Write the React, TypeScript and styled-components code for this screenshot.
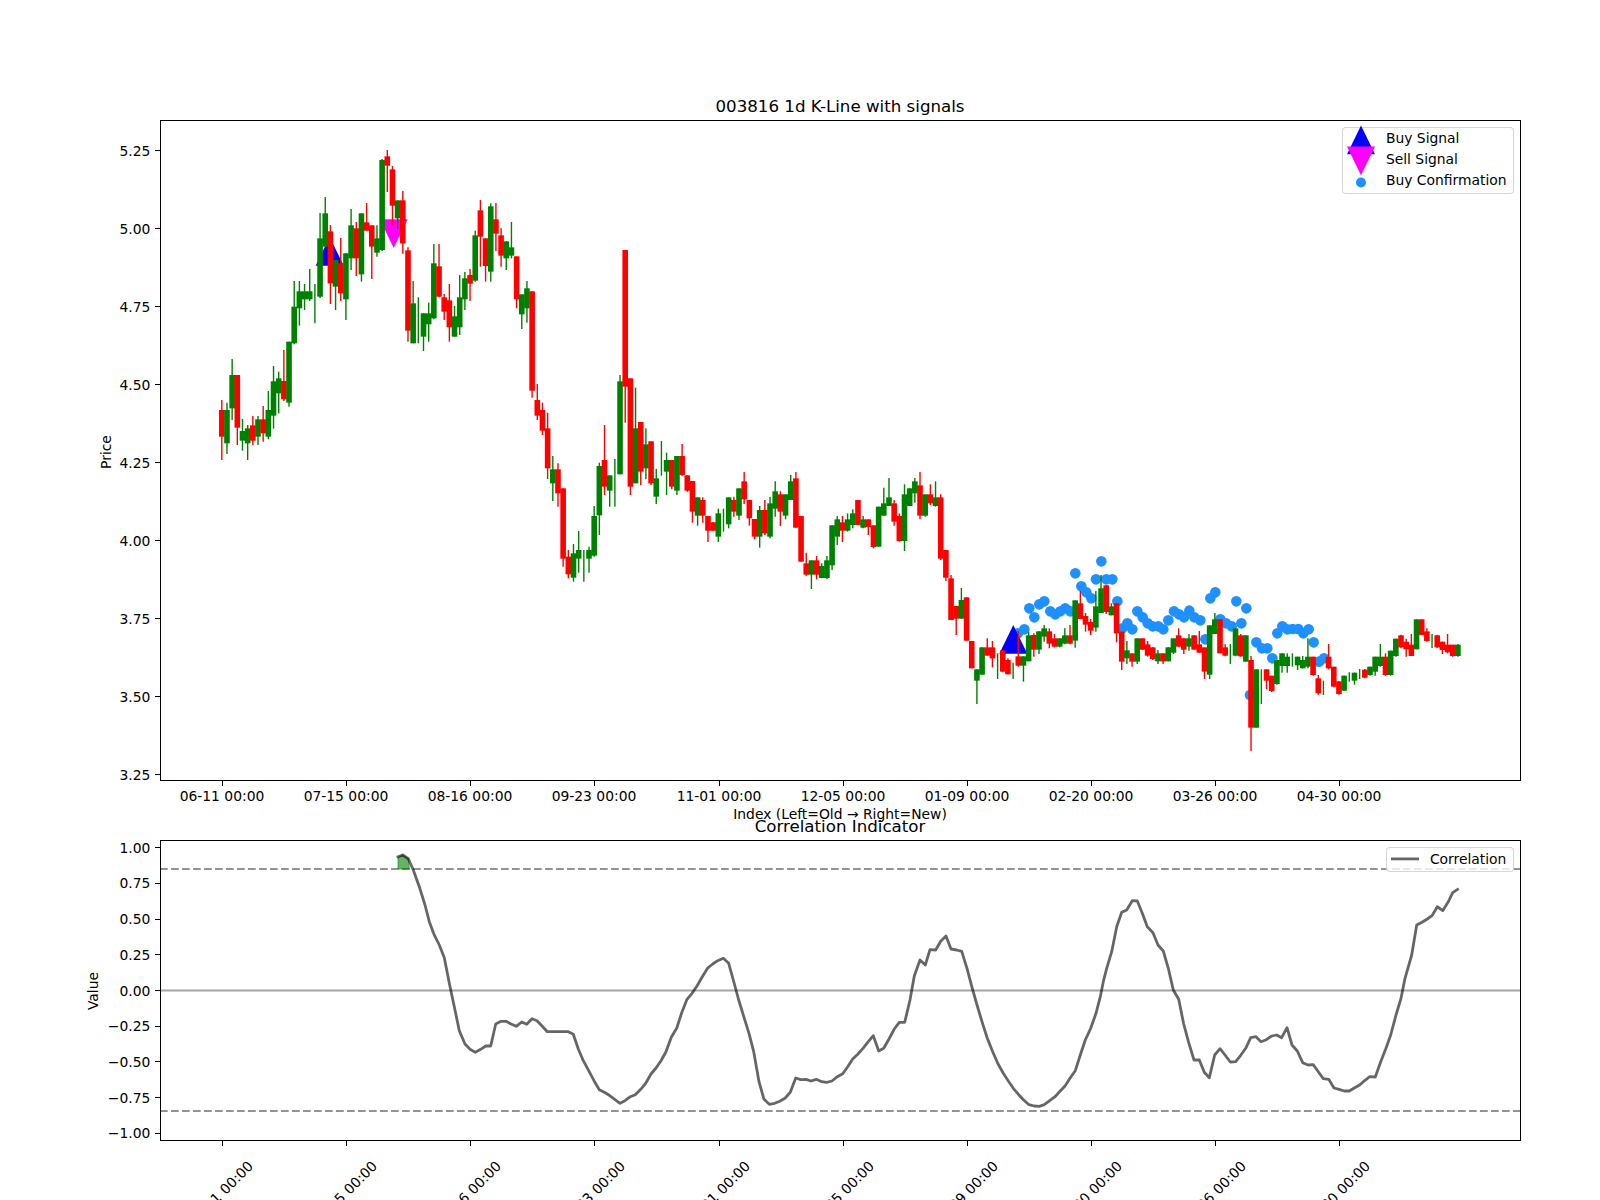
import React from "react";
import styled, { createGlobalStyle } from "styled-components";

type Candle = ["g" | "r", number, number, number, number];

// candle rows: colour, wick top, body top, body bottom, wick bottom
// rows are kept at 3x so they can be read against a zoomed chart, base is the screen y of 0
const rows = (base: number, list: Candle[]): Candle[] =>
  list.map(([c, a, b, d, e]) => [c, base + a / 3, base + b / 3, base + d / 3, base + e / 3]);

const CANDLES: Candle[] = [
  ...rows(380, [
    ["r", 60, 90, 170, 240], ["g", 68, 90, 190, 222], ["g", -63, -15, 85, 120], ["r", -15, -15, 143, 195],
    ["g", 117, 153, 182, 212], ["g", 135, 145, 190, 240], ["r", 108, 136, 182, 195], ["g", 108, 118, 170, 195],
    ["r", 78, 118, 160, 185], ["g", 33, 90, 170, 178], ["g", -42, 4, 107, 146], ["g", -25, -5, 40, 100],
    ["r", -90, 3, 58, 63], ["g", -115, -115, 68, 80],
  ]),
  ...rows(90, [
    ["g", 573, 650, 760, 763], ["g", 573, 604, 655, 707], ["g", 582, 604, 628, 660], ["g", 537, 604, 628, 633],
    ["g", 582, 612, 612, 700], ["g", 369, 445, 620, 624], ["g", 321, 370, 470, 470], ["r", 405, 424, 580, 642],
    ["g", 510, 510, 590, 660], ["r", 444, 520, 610, 633], ["g", 490, 490, 628, 690], ["g", 357, 406, 505, 540],
    ["r", 396, 415, 505, 558], ["g", 370, 370, 553, 575], ["r", 339, 397, 422, 422], ["r", 406, 406, 470, 567],
    ["g", 406, 445, 488, 500], ["g", 207, 210, 480, 483], ["r", 180, 199, 227, 306], ["r", 228, 238, 347, 406],
    ["g", 331, 331, 385, 417], ["r", 303, 331, 460, 491], ["r", 472, 481, 722, 755], ["g", 573, 640, 760, 760],
    ["g", 622, 690, 690, 760], ["g", 670, 670, 740, 783], ["g", 638, 670, 703, 755], ["g", 462, 520, 685, 688],
    ["r", 462, 529, 620, 622], ["r", 612, 622, 665, 690], ["r", 582, 631, 712, 755], ["g", 648, 679, 740, 740],
    ["g", 555, 622, 712, 735], ["g", 546, 565, 628, 660], ["r", 537, 555, 581, 633], ["g", 422, 436, 572, 575],
    ["r", 330, 361, 440, 530], ["r", 445, 445, 528, 575], ["g", 340, 349, 545, 575], ["r", 339, 388, 431, 483],
    ["r", 415, 436, 497, 530], ["g", 454, 454, 505, 540], ["g", 396, 472, 497, 505], ["r", 499, 499, 628, 655],
    ["g", 613, 613, 673, 717], ["g", 573, 595, 655, 698], ["r", 604, 604, 902, 923], ["r", 882, 930, 977, 990],
    ["r", 938, 960, 1022, 1035], ["r", 968, 1015, 1135, 1167],
  ]),
  ...rows(220, [
    ["g", 708, 748, 790, 843], ["r", 730, 748, 820, 860], ["r", 805, 805, 1016, 1040], ["r", 990, 1010, 1063, 1075],
    ["g", 972, 1000, 1073, 1085], ["g", 933, 990, 1016, 1058], ["g", 990, 1030, 1030, 1085], ["g", 980, 990, 1016, 1058],
    ["g", 858, 888, 1007, 1010], ["g", 728, 738, 886, 945], ["r", 615, 720, 800, 825], ["g", 766, 766, 812, 860],
    ["g", 717, 790, 790, 860], ["g", 465, 484, 763, 763], ["r", 90, 90, 500, 608], ["r", 475, 475, 800, 825],
    ["g", 503, 625, 790, 790], ["r", 606, 606, 755, 795], ["g", 625, 673, 745, 778], ["r", 664, 664, 790, 795],
    ["g", 747, 775, 830, 852], ["g", 663, 715, 715, 767], ["g", 698, 720, 755, 825], ["r", 720, 720, 800, 808],
    ["g", 708, 708, 812, 825], ["r", 672, 708, 765, 768], ["r", 766, 766, 812, 815], ["r", 783, 783, 875, 908],
    ["g", 832, 832, 887, 917], ["r", 832, 840, 887, 908], ["r", 888, 888, 932, 966], ["r", 907, 907, 932, 932],
    ["g", 866, 880, 950, 966], ["g", 866, 900, 900, 935], ["g", 832, 832, 913, 925], ["r", 830, 840, 875, 890],
    ["g", 805, 805, 887, 900], ["r", 756, 784, 838, 852], ["r", 840, 840, 895, 917], ["r", 897, 897, 950, 958],
    ["g", 858, 870, 950, 983], ["r", 840, 870, 940, 945], ["g", 830, 850, 950, 955], ["g", 784, 814, 866, 890],
    ["r", 814, 823, 875, 918], ["g", 823, 823, 887, 898], ["g", 765, 784, 840, 840], ["r", 756, 775, 923, 923],
    ["r", 888, 888, 1025, 1025], ["r", 998, 1030, 1064, 1068], ["g", 1021, 1021, 1064, 1107], ["r", 1008, 1021, 1064, 1078],
    ["g", 1030, 1038, 1074, 1075], ["g", 1008, 1021, 1074, 1078], ["g", 916, 916, 1036, 1050], ["g", 888, 898, 950, 975],
    ["r", 888, 907, 932, 966], ["g", 880, 898, 932, 935], ["g", 868, 880, 915, 925], ["r", 840, 840, 915, 915],
    ["g", 888, 898, 923, 925], ["r", 898, 898, 921, 945], ["r", 916, 916, 981, 985], ["g", 860, 860, 980, 980],
    ["g", 803, 850, 887, 887], ["g", 774, 832, 858, 858], ["r", 840, 850, 905, 917], ["r", 880, 888, 963, 965],
    ["g", 793, 823, 963, 993], ["g", 805, 805, 858, 858], ["g", 774, 784, 820, 848], ["r", 756, 796, 887, 898],
    ["g", 823, 823, 887, 890], ["r", 793, 823, 850, 855], ["g", 784, 832, 858, 860], ["r", 823, 832, 1016, 1020],
    ["r", 990, 990, 1073, 1083],
  ]),
  ...rows(540, [
    ["r", 105, 115, 240, 240], ["r", 198, 198, 236, 285], ["g", 144, 180, 236, 236], ["r", 172, 172, 302, 302],
    ["r", 303, 303, 385, 385], ["g", 388, 388, 422, 492], ["g", 322, 322, 404, 404], ["r", 295, 322, 347, 347],
    ["r", 303, 322, 355, 382], ["g", 340, 380, 380, 417], ["r", 331, 331, 395, 397], ["r", 355, 360, 403, 403],
    ["g", 368, 395, 395, 417], ["r", 273, 349, 377, 380], ["g", 349, 349, 377, 425], ["g", 275, 286, 364, 364],
    ["r", 280, 285, 329, 350], ["g", 274, 274, 329, 342], ["g", 255, 265, 290, 305], ["r", 265, 274, 311, 325],
    ["r", 282, 295, 320, 322], ["g", 295, 295, 320, 322], ["g", 265, 286, 311, 313], ["r", 255, 286, 311, 313],
    ["g", 181, 181, 302, 323], ["r", 153, 190, 237, 237], ["r", 219, 228, 254, 275], ["r", 237, 246, 272, 285],
    ["g", 153, 199, 263, 275], ["g", 105, 145, 219, 219], ["r", 136, 136, 216, 222], ["g", 190, 199, 226, 226],
    ["r", 190, 190, 280, 307], ["r", 275, 275, 365, 390], ["g", 303, 331, 355, 372], ["r", 340, 340, 365, 380],
    ["g", 295, 295, 365, 372], ["r", 295, 295, 329, 330], ["r", 303, 313, 347, 350], ["r", 322, 322, 357, 360],
    ["g", 330, 340, 364, 372], ["r", 340, 340, 364, 372], ["g", 322, 322, 364, 364], ["g", 295, 295, 338, 342],
    ["r", 265, 286, 320, 320], ["r", 295, 295, 329, 342], ["g", 282, 295, 320, 332], ["r", 286, 286, 329, 329],
    ["r", 273, 313, 338, 338], ["r", 322, 322, 395, 417], ["g", 256, 256, 404, 417], ["g", 219, 238, 282, 282],
    ["r", 238, 238, 340, 340], ["r", 313, 322, 347, 349], ["g", 312, 340, 340, 372], ["g", 265, 265, 347, 349],
    ["r", 282, 286, 349, 350], ["g", 286, 286, 365, 365],
  ]),
  ...rows(560, [
    ["r", 288, 300, 503, 573], ["g", 328, 328, 503, 503], ["g", 328, 380, 380, 432], ["r", 328, 328, 362, 387],
    ["r", 347, 347, 393, 396], ["g", 300, 300, 372, 374], ["g", 280, 280, 318, 338], ["g", 280, 290, 318, 338],
    ["g", 280, 300, 300, 320], ["g", 290, 290, 316, 330], ["g", 288, 300, 325, 325], ["g", 235, 290, 320, 325],
    ["r", 290, 290, 345, 347], ["r", 345, 355, 400, 404], ["g", 362, 380, 380, 405], ["r", 252, 290, 325, 328],
    ["r", 320, 320, 380, 382], ["r", 364, 364, 402, 404], ["g", 347, 347, 392, 393], ["g", 337, 350, 350, 365],
    ["g", 338, 338, 362, 374], ["g", 327, 340, 340, 357], ["r", 327, 329, 353, 355], ["g", 320, 320, 345, 347],
    ["g", 290, 290, 335, 347], ["g", 252, 290, 318, 320], ["r", 280, 290, 345, 347], ["g", 272, 272, 345, 347],
    ["g", 236, 236, 288, 290], ["r", 224, 226, 262, 265], ["r", 236, 245, 268, 290], ["r", 222, 254, 288, 288],
    ["g", 178, 178, 268, 268], ["r", 178, 178, 225, 225], ["r", 205, 214, 243, 245], ["g", 222, 240, 240, 264],
    ["r", 224, 226, 262, 264], ["r", 245, 245, 270, 282], ["r", 222, 254, 277, 280], ["r", 254, 254, 288, 290],
    ["g", 252, 254, 288, 290],
  ]),
];

type Point = [number, number];

const scaled = (bx: number, by: number, list: Point[]): Point[] =>
  list.map(([x, y]) => [bx + x / 3, by + y / 3]);

const DOTS: Point[] = [
  ...scaled(950, 540, [
    [204, 280], [223, 268], [238, 205], [253, 232], [268, 193], [283, 184], [301, 214], [316, 223], [331, 214],
    [346, 205], [361, 214], [376, 100], [394, 139], [409, 157], [424, 175], [438, 118], [454, 64], [469, 118],
    [487, 118], [502, 184], [517, 265], [532, 250], [547, 268], [562, 214], [578, 232], [593, 250], [608, 259],
    [625, 259], [640, 268], [655, 241], [672, 214], [687, 223], [702, 232], [718, 212], [733, 232], [751, 241],
    [766, 298], [781, 175], [796, 157], [811, 238], [828, 250], [845, 259], [859, 184], [874, 250], [889, 205],
  ]),
  ...scaled(1200, 560, [
    [150, 405], [169, 247], [186, 265], [202, 265], [217, 295], [232, 220], [247, 199], [262, 208], [278, 207],
    [295, 207], [310, 220], [326, 208], [341, 247], [357, 305], [372, 295],
  ]),
];

const CORRELATION: Point[] = [
  ...scaled(80, 780, [
    [950, 232], [968, 225], [985, 236], [1000, 270], [1018, 320], [1035, 375], [1048, 425], [1062, 463], [1078, 495],
    [1093, 533], [1108, 610], [1123, 680], [1138, 752], [1155, 792], [1170, 808], [1186, 817], [1202, 808], [1217, 798],
    [1232, 798], [1247, 732], [1263, 724], [1278, 724], [1293, 732], [1309, 739], [1325, 726], [1340, 733], [1356, 716],
    [1371, 722], [1387, 739], [1402, 755], [1418, 755], [1433, 755], [1449, 755], [1465, 755],
  ]),
  ...scaled(560, 900, [
    [40, 403], [55, 447], [70, 482], [86, 512], [102, 542], [118, 569], [133, 577], [148, 586], [164, 598], [180, 610],
    [195, 602], [211, 590], [226, 584], [242, 568], [257, 550], [273, 522], [288, 504], [303, 482], [318, 455], [334, 412],
    [350, 385], [365, 338], [381, 298], [396, 280], [411, 258], [427, 230], [443, 204], [458, 192], [473, 182], [490, 175],
    [506, 190], [520, 240], [536, 300], [552, 352], [567, 400], [581, 455], [597, 545], [612, 598], [628, 613], [644, 610],
    [659, 604], [675, 595], [691, 577], [707, 534], [722, 539], [738, 538], [753, 543], [769, 538], [785, 545], [800, 547],
    [816, 543], [832, 530], [848, 521], [863, 500], [878, 477], [894, 462], [909, 445], [925, 425], [940, 407], [956, 453],
    [971, 445], [987, 417], [1003, 387], [1018, 367], [1034, 367], [1050, 300], [1063, 228], [1080, 180], [1096, 195],
    [1110, 149], [1127, 150], [1142, 124], [1158, 108], [1173, 147], [1190, 150], [1205, 154], [1221, 205], [1236, 262],
    [1252, 318], [1267, 368], [1282, 415], [1298, 455], [1313, 490], [1330, 520], [1345, 543], [1360, 565], [1376, 584],
    [1391, 600], [1407, 614], [1422, 618], [1438, 619], [1453, 614], [1469, 602], [1485, 590], [1500, 574],
  ]),
  ...scaled(1020, 870, [
    [135, 648], [150, 625], [166, 602], [181, 555], [196, 510], [212, 475], [228, 430], [241, 380], [250, 335], [260, 295],
    [275, 245], [290, 170], [305, 127], [320, 120], [337, 92], [352, 93], [367, 130], [382, 170], [399, 188], [414, 225],
    [430, 243], [445, 295], [460, 360], [476, 388], [491, 462], [506, 518], [522, 570], [538, 570], [553, 607], [568, 623],
    [584, 555], [600, 536], [615, 555], [631, 576], [647, 575], [662, 556], [677, 535], [692, 503], [708, 500], [723, 515],
    [739, 509], [755, 498], [770, 495], [785, 503], [801, 473], [816, 525], [832, 543], [848, 578], [864, 585], [880, 584],
    [895, 605], [910, 626], [926, 628], [942, 654], [957, 658], [973, 663], [988, 663], [1004, 653], [1020, 644], [1035, 631],
    [1049, 620], [1066, 621], [1082, 575], [1097, 537], [1112, 495], [1128, 435], [1143, 385], [1155, 325], [1175, 255],
    [1190, 165], [1206, 157], [1222, 147], [1237, 136], [1252, 110], [1268, 122], [1284, 97], [1298, 68], [1316, 56],
  ]),
];

const DATES = ["06-11", "07-15", "08-16", "09-23", "11-01", "12-05", "01-09", "02-20", "03-26", "04-30"];
const PRICES = [5.25, 5.0, 4.75, 4.5, 4.25, 4.0, 3.75, 3.5, 3.25];
const VALUES = [1, 0.75, 0.5, 0.25, 0, -0.25, -0.5, -0.75, -1];

const candleX = (i: number) => 221.8 + 5.172 * i;
const tickX = (k: number) => Math.floor(222.7 + 124.08 * k) + 0.5;
const priceY = (p: number) => 228.3 + (5 - p) * 312;
const valueY = (v: number) => 990.5 - 142.8 * v;
const crisp = (n: number) => Math.floor(n) + 0.5;
const pts = (list: Point[]) => list.map(([x, y]) => `${x.toFixed(1)},${y.toFixed(1)}`).join(" ");
const fmt = (v: number) => v.toFixed(2).replace("-", "\u2212");

const GlobalStyle = createGlobalStyle`
  html, body {
    margin: 0;
    background: #fff;
    overflow: hidden;
  }
`;

const Figure = styled.div`
  width: 1600px;
  height: 1200px;
  padding-left: 160px;
  box-sizing: border-box;
  overflow: hidden;
  background: #fff;
  color: #000;
  font-family: "DejaVu Sans", sans-serif;
`;

const Column = styled.div`
  width: 1360px;
  display: flex;
  flex-direction: column;
`;

const AxesTitle = styled.h2<{ $top: number; $bottom: number }>`
  margin: ${(p) => p.$top}px 0 ${(p) => p.$bottom}px;
  font-size: 16.67px;
  font-weight: 400;
  line-height: 20px;
  text-align: center;
`;

const XLabel = styled.div`
  margin-top: 24px;
  font-size: 13.89px;
  line-height: 20px;
  text-align: center;
`;

const AxesFrame = styled.div<{ $height: number }>`
  position: relative;
  height: ${(p) => p.$height}px;
`;

const Plot = styled.svg`
  display: block;
  overflow: visible;
`;

const TickLabel = styled.text`
  font-family: "DejaVu Sans", sans-serif;
  font-size: 13.89px;
  fill: #000;
`;

const Tick = styled.line`
  stroke: #000;
  stroke-width: 1;
  shape-rendering: crispEdges;
`;

const Spines = styled.rect`
  fill: none;
  stroke: #000;
  stroke-width: 1;
  shape-rendering: crispEdges;
`;

const Legend = styled.div<{ $width: number; $padTop: number }>`
  position: absolute;
  top: 7.3px;
  right: 6.3px;
  width: ${(p) => p.$width}px;
  box-sizing: border-box;
  padding: ${(p) => p.$padTop}px 3.5px ${(p) => 2 - p.$padTop}px 4.2px;
  background: rgba(255, 255, 255, 0.8);
  border: 1.1px solid rgba(204, 204, 204, 0.8);
  border-radius: 4px;
`;

const LegendRow = styled.div`
  display: flex;
  align-items: center;
  gap: 11px;
  height: 21px;
  font-size: 13.89px;
  white-space: nowrap;
`;

const LegendLabel = styled.span`
  margin-bottom: 2px;
`;

const Swatch = styled.svg`
  flex: none;
  width: 28px;
  height: 21px;
  overflow: visible;
`;

const Candles = () => (
  <g>
    {CANDLES.map(([c, wickTop, bodyTop, bodyBottom, wickBottom], i) => {
      const x = candleX(i);
      const colour = c === "g" ? "#008000" : "#ff0000";
      return (
        <g key={i}>
          <line x1={x} x2={x} y1={wickTop} y2={wickBottom} stroke={colour} strokeWidth={1.4} />
          {bodyBottom > bodyTop && (
            <rect x={x - 2.8} y={bodyTop} width={5.6} height={bodyBottom - bodyTop} fill={colour} />
          )}
        </g>
      );
    })}
  </g>
);

const triangleUp = (x: number, base: number) => `${x - 14},${base} ${x + 14},${base} ${x},${base - 28.7}`;
const triangleDown = (x: number, base: number) => `${x - 14},${base} ${x + 14},${base} ${x},${base + 28.7}`;

const PricePlot = () => (
  <Plot width={1360} height={660} viewBox="160 120 1360 660">
    {DOTS.map(([x, y], i) => (
      <circle key={i} cx={x} cy={y} r={5.3} fill="#1e90ff" />
    ))}
    <polygon points={triangleUp(329.7, 265.7)} fill="#0000ff" />
    <polygon points={triangleUp(1013.3, 653.7)} fill="#0000ff" />
    <polygon points={triangleDown(393.7, 219.3)} fill="#ff00ff" />
    <Candles />
    {PRICES.map((p) => (
      <g key={p}>
        <Tick x1={155.1} x2={160} y1={crisp(priceY(p))} y2={crisp(priceY(p))} />
        <TickLabel x={150.3} y={priceY(p) + 0.8} textAnchor="end" dominantBaseline="central">
          {fmt(p)}
        </TickLabel>
      </g>
    ))}
    {DATES.map((d, k) => (
      <g key={d}>
        <Tick x1={tickX(k)} x2={tickX(k)} y1={781} y2={785.9} />
        <TickLabel x={tickX(k) - 0.5} y={800.7} textAnchor="middle">
          {d} 00:00
        </TickLabel>
      </g>
    ))}
    <TickLabel x={106} y={452} textAnchor="middle" dominantBaseline="central" transform="rotate(-90 106 452)">
      Price
    </TickLabel>
    <Spines x={160.5} y={120.5} width={1360} height={660} />
  </Plot>
);

const CorrelationPlot = () => (
  <Plot width={1360} height={300} viewBox="160 840 1360 300">
    <line x1={160} x2={1520} y1={990.5} y2={990.5} stroke="#a6a6a6" strokeWidth={2} />
    <line x1={160} x2={1520} y1={869} y2={869} stroke="#808080" strokeOpacity={0.85} strokeWidth={2} strokeDasharray="7.7 3.3" />
    <line x1={160} x2={1520} y1={1111} y2={1111} stroke="#808080" strokeOpacity={0.85} strokeWidth={2} strokeDasharray="7.7 3.3" />
    <polygon
      points="398,857.7 402.7,855 408.3,858.7 409.3,869 398,869"
      fill="#008000"
      fillOpacity={0.6}
      stroke="#008000"
      strokeOpacity={0.6}
    />
    <polyline points={pts(CORRELATION)} fill="none" stroke="#000" strokeOpacity={0.6} strokeWidth={2.8} strokeLinejoin="round" />
    {VALUES.map((v) => (
      <g key={v}>
        <Tick x1={155.1} x2={160} y1={crisp(valueY(v))} y2={crisp(valueY(v))} />
        <TickLabel x={150.3} y={valueY(v)} textAnchor="end" dominantBaseline="central">
          {fmt(v)}
        </TickLabel>
      </g>
    ))}
    {DATES.map((d, k) => {
      const x = tickX(k) - 2;
      return (
        <g key={d}>
          <Tick x1={tickX(k)} x2={tickX(k)} y1={1141} y2={1145.9} />
          <TickLabel x={x} y={1193.4} textAnchor="middle" dominantBaseline="central" transform={`rotate(-45 ${x} 1193.4)`}>
            {d} 00:00
          </TickLabel>
        </g>
      );
    })}
    <TickLabel x={93} y={991} textAnchor="middle" dominantBaseline="central" transform="rotate(-90 93 991)">
      Value
    </TickLabel>
    <Spines x={160.5} y={840.5} width={1360} height={300} />
  </Plot>
);

export default function App() {
  return (
    <Figure>
      <GlobalStyle />
      <Column>
        <AxesTitle $top={97} $bottom={3}>003816 1d K-Line with signals</AxesTitle>
        <AxesFrame $height={660}>
          <PricePlot />
          <Legend $width={172} $padTop={0}>
            <LegendRow>
              <Swatch viewBox="0 0 28 21">
                <polygon points="0,26.2 28,26.2 14,-2.5" fill="#0000ff" />
              </Swatch>
              <LegendLabel>Buy Signal</LegendLabel>
            </LegendRow>
            <LegendRow>
              <Swatch viewBox="0 0 28 21">
                <polygon points="0,-2.5 28,-2.5 14,26.2" fill="#ff00ff" />
              </Swatch>
              <LegendLabel>Sell Signal</LegendLabel>
            </LegendRow>
            <LegendRow>
              <Swatch viewBox="0 0 28 21">
                <circle cx={14} cy={12.5} r={5} fill="#1e90ff" />
              </Swatch>
              <LegendLabel>Buy Confirmation</LegendLabel>
            </LegendRow>
          </Legend>
        </AxesFrame>
        <XLabel>Index (Left=Old → Right=New)</XLabel>
        <AxesTitle $top={-7.5} $bottom={3.5}>Correlation Indicator</AxesTitle>
        <AxesFrame $height={300}>
          <CorrelationPlot />
          <Legend $width={128} $padTop={1}>
            <LegendRow>
              <Swatch viewBox="0 0 28 21">
                <line x1={0} x2={28} y1={9.9} y2={9.9} stroke="#000" strokeOpacity={0.6} strokeWidth={2.8} />
              </Swatch>
              <LegendLabel>Correlation</LegendLabel>
            </LegendRow>
          </Legend>
        </AxesFrame>
      </Column>
    </Figure>
  );
}
